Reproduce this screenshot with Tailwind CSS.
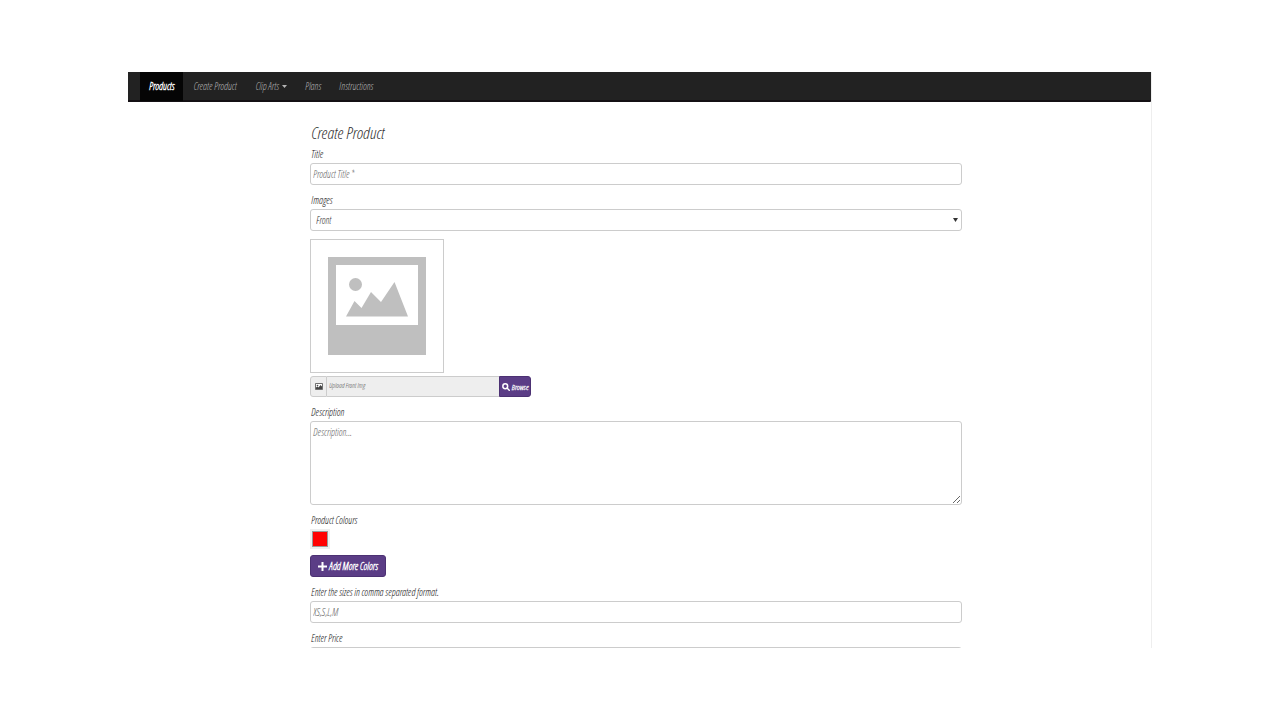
<!DOCTYPE html>
<html lang="en">

<head>
    <meta charset="UTF-8">
    <meta name="viewport" content="width=device-width, initial-scale=1.0">
    <title>Create Product</title>
    <script src="https://cdn.jsdelivr.net/npm/@tailwindcss/browser@4"></script>
</head>

<body class="h-screen overflow-hidden bg-white px-[10%] py-18 font-['Open_Sans_Condensed_Light','Roboto_Condensed',sans-serif] text-[10px] italic text-[#333]">
    <div class="h-full overflow-hidden border-r border-[#eee]">
        <nav class="-mr-px flex h-[30px] rounded-br-[3px] border-b-2 border-[#141014] bg-[#222] pl-3 leading-7 text-[#b4b4b4]">
            <a href="#" class="-mb-px bg-[#050505] px-[9px] font-bold text-white">Products</a>
            <a href="#" class="px-[10px]">Create Product</a>
            <a href="#" class="flex items-center gap-[3px] px-[9px]">Clip Arts
                <svg class="h-[3px] w-[5px]" viewBox="0 0 5 3" fill="currentColor"><path d="M0 0h5L2.500 3z" /></svg>
            </a>
            <a href="#" class="px-[9px]">Plans</a>
            <a href="#" class="px-[9px]">Instructions</a>
        </nav>

        <form class="pt-[22px] pr-[189px] pl-[182px]">
            <h1 class="h-[21px] pl-px text-[17px] leading-[18px]">Create Product</h1>

            <div class="mb-[6px]">
                <label for="title" class="block pl-px leading-[18px] text-[#111]">Title</label>
                <input id="title" type="text" placeholder="Product Title *"
                    class="block h-[22px] w-full rounded-[3px] border border-[#ccc] px-[2px] placeholder:text-[#666]">
            </div>

            <div class="mb-2">
                <label for="side" class="block pl-px leading-[18px] text-[#111]">Images</label>
                <div class="relative">
                    <select id="side" class="block h-[22px] w-full appearance-none rounded-[3px] border border-[#ccc] bg-white px-[5px] text-[#333]">
                        <option>Front</option>
                        <option>Back</option>
                    </select>
                    <svg class="pointer-events-none absolute top-[9px] right-1 h-1 w-[5px]" viewBox="0 0 5 4" fill="#333"><path d="M0 0h5L2.500 4z" /></svg>
                </div>
            </div>

            <div class="mb-[3px] size-[134px] border border-[#ccc] p-[17px]">
                <svg class="size-[98px]" viewBox="0 0 98 98" fill="#bfbfbf">
                    <path d="M0 0h98v98H0z" />
                    <path fill="#fff" d="M8 8h82v60H8z" />
                    <circle cx="27.500" cy="27.500" r="6.500" />
                    <path d="M18 59.500l8.500-15.500 7 7L43 35l10 10 13.500-20L80 59.500z" />
                </svg>
            </div>

            <div class="mb-[6px] flex h-[21px] w-[221px]">
                <label for="upload" class="flex w-[17px] items-center justify-center rounded-l-[3px] border border-[#ccc] bg-[#eee]" aria-label="Front image">
                    <svg class="h-[7px] w-2" viewBox="0 0 16 14">
                        <path fill="#fff" stroke="#444" stroke-width="1.500" d="M1 1h14v12H1z" />
                        <circle cx="5" cy="5" r="1.700" fill="#444" />
                        <path fill="#444" d="M2 12V9l3-2 2 2 4-5 3 3v5z" />
                    </svg>
                </label>
                <input id="upload" type="text" readonly placeholder="Upload Front Img"
                    class="min-w-0 flex-1 border-y border-[#ccc] bg-[#eee] px-[2px] text-[7px] placeholder:text-[#555]">
                <button type="button" class="flex w-8 items-center justify-center gap-[2px] rounded-r-[3px] border border-[#4c3173] bg-[#5b3d86] text-[8px] font-bold text-white italic">
                    <svg class="size-2 shrink-0" viewBox="0 0 16 16" fill="none" stroke="#fff" stroke-width="3">
                        <circle cx="6.500" cy="6.500" r="4.800" />
                        <path stroke-linecap="round" d="M10.500 10.500l4 4" />
                    </svg>
                    Browse
                </button>
            </div>

            <div class="mb-[6px]">
                <label for="description" class="block pl-px leading-[18px] text-[#111]">Description</label>
                <textarea id="description" placeholder="Description..."
                    class="block h-[84px] w-full resize-y rounded-[3px] border border-[#ccc] px-[2px] py-1 leading-[12px] placeholder:text-[#666]"></textarea>
            </div>

            <div class="mb-[6px]">
                <label for="colour" class="block pl-px leading-[18px] text-[#111]">Product Colours</label>
                <input id="colour" type="color" value="#ff0000"
                    class="mb-[6px] block h-5 w-5 appearance-none border-2 border-[#eee] bg-[#eee] [&::-webkit-color-swatch]:border-[#999] [&::-webkit-color-swatch-wrapper]:p-0">
                <button type="button" class="flex h-[22px] w-[76px] items-center justify-center gap-[2px] rounded-[3px] border border-[#4c3173] bg-[#5b3d86] font-bold whitespace-nowrap text-white italic">
                    <svg class="size-[9px] shrink-0" viewBox="0 0 9 9" fill="#fff"><path d="M3.500 0h2v3.500H9v2H5.500V9h-2V5.500H0v-2h3.500z" /></svg>
                    Add More Colors
                </button>
            </div>

            <div class="mb-[6px]">
                <label for="sizes" class="block pl-px leading-[18px] text-[#111]">Enter the sizes in comma separated format.</label>
                <input id="sizes" type="text" placeholder="XS,S,L,M"
                    class="block h-[22px] w-full rounded-[3px] border border-[#ccc] px-[2px] placeholder:text-[#666]">
            </div>

            <div>
                <label for="price" class="block pl-px leading-[18px] text-[#111]">Enter Price</label>
                <input id="price" type="text" class="block h-[22px] w-full rounded-[3px] border border-[#ccc] px-[2px]">
            </div>
        </form>
    </div>
</body>

</html>
